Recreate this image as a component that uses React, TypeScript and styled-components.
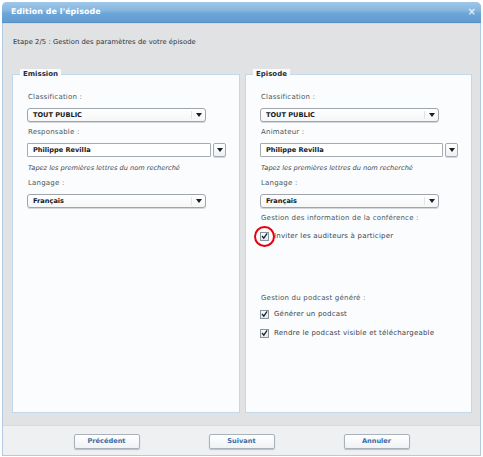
import React from "react";
import styled, { createGlobalStyle } from "styled-components";

const Global = createGlobalStyle`
  html, body { margin: 0; padding: 0; background: #ffffff; }
  body { font-family: "DejaVu Sans", Verdana, sans-serif; }
  * { box-sizing: border-box; }
`;

const Dialog = styled.div`
  margin: 2px 0 0 2px;
  width: 479px;
  height: 454px;
  display: flex;
  flex-direction: column;
  border: 1px solid #b3cbe0;
  border-top: none;
  border-radius: 5px 5px 0 0;
  background: #e1e2e4;
`;

const Header = styled.div`
  height: 21px;
  flex: none;
  display: flex;
  align-items: center;
  justify-content: space-between;
  padding: 0 5px 1px 9px;
  margin: 0 -1px;
  border-radius: 5px 5px 0 0;
  background: linear-gradient(#a0c7e8 0%, #84b5df 45%, #6ea6d7 55%, #619cd1 100%);
  border-bottom: 1px solid #5690c6;
`;

const Title = styled.span`
  color: #ffffff;
  font-weight: bold;
  font-size: 7.9px;
  letter-spacing: 0.1px;
`;

const Close = styled.span`
  color: #e4eef7;
  font-weight: bold;
  font-size: 10px;
  line-height: 10px;
`;

const Body = styled.div`
  flex: 1;
  display: flex;
  flex-direction: column;
  padding: 13px 8px 12px 9px;
  border-top: 1px solid #c7dcee;
`;

const Step = styled.div`
  font-size: 6.8px;
  line-height: 10px;
  color: #2e3338;
  padding-left: 1px;
  letter-spacing: 0.05px;
`;

const Columns = styled.div`
  margin-top: 22px;
  flex: 1;
  display: grid;
  grid-template-columns: 228px 227px;
  column-gap: 5px;
`;

const Panel = styled.fieldset`
  margin: 0;
  min-width: 0;
  padding: 13px 14px 0 14px;
  border: 1px solid #c4d8e9;
  background: #fbfcfd;
  display: flex;
  flex-direction: column;
  align-items: flex-start;
`;

const Legend = styled.legend`
  font-size: 7px;
  line-height: 10px;
  font-weight: bold;
  color: #1d3042;
  padding: 0 3px;
  margin-left: -7px;
  background: #fbfcfd;
`;

const Label = styled.div<{ $gap?: number }>`
  font-size: 7px;
  line-height: 10px;
  color: #4a5660;
  letter-spacing: 0.2px;
  margin: ${(p) => p.$gap ?? 0}px 0 6px 1px;
`;

const Hint = styled.div`
  font-size: 6.6px;
  line-height: 10px;
  font-style: italic;
  color: #3b4650;
  margin-top: 6px;
  padding-left: 1px;
`;

const Select = styled.div<{ $w: number; $h: number }>`
  width: ${(p) => p.$w}px;
  height: ${(p) => p.$h}px;
  display: flex;
  align-items: stretch;
  border: 1px solid #9ea5ac;
  border-radius: 3px;
  background: linear-gradient(#ffffff, #f5f6f7);
  box-shadow: 0 1px 0 #d4d8dc;
  margin-bottom: 5px;
`;

const Value = styled.span`
  flex: 1;
  font-size: 6.6px;
  font-weight: bold;
  color: #15191d;
  display: flex;
  align-items: center;
  padding-left: 5px;
`;

const ArrowCell = styled.span`
  width: 14px;
  display: flex;
  align-items: center;
  justify-content: center;
  border-left: 1px solid #e2e5e8;
  margin: 2px 0;
`;

const Arrow = styled.span`
  width: 0;
  height: 0;
  border-left: 3px solid transparent;
  border-right: 3px solid transparent;
  border-top: 4px solid #1b1f23;
`;

const Combo = styled.div`
  display: flex;
  gap: 2px;
`;

const Input = styled.div<{ $w: number }>`
  width: ${(p) => p.$w}px;
  height: 14px;
  border: 1px solid #a4abb2;
  border-radius: 1px;
  background: #ffffff;
  font-size: 6.6px;
  font-weight: bold;
  color: #15191d;
  display: flex;
  align-items: center;
  padding-left: 5px;
`;

const DropButton = styled.div`
  width: 13px;
  height: 14px;
  border: 1px solid #a4abb2;
  border-radius: 2px;
  background: linear-gradient(#ffffff, #eef0f2);
  box-shadow: 0 1px 0 #d4d8dc;
  display: flex;
  align-items: center;
  justify-content: center;
`;

const CheckRow = styled.div<{ $top: number }>`
  position: relative;
  display: flex;
  align-items: center;
  gap: 5px;
  height: 10px;
  margin-top: ${(p) => p.$top}px;
  font-size: 7px;
  color: #3a454f;
  letter-spacing: 0.2px;
`;

const Box = styled.span`
  width: 9px;
  height: 9px;
  border: 1px solid #8c959d;
  background: linear-gradient(#fafbfc, #e4e7ea);
  display: flex;
  align-items: center;
  justify-content: center;
`;

const Ring = styled.span`
  position: absolute;
  left: -6px;
  top: -5.5px;
  width: 21px;
  height: 21px;
  border: 2.5px solid #e3000f;
  border-radius: 50%;
`;

const Footer = styled.div`
  height: 30px;
  flex: none;
  display: flex;
  align-items: center;
  justify-content: center;
  gap: 69px;
  background: #eef0f2;
  border-top: 1px solid #d3dce4;
  padding-top: 1px;
`;

const Button = styled.button`
  width: 66px;
  height: 15px;
  padding: 0;
  border: 1px solid #a9b2bb;
  border-radius: 2px;
  background: linear-gradient(#ffffff, #f0f2f4);
  box-shadow: 0 1px 1px #b8c0c8;
  font-family: "DejaVu Sans", Verdana, sans-serif;
  font-size: 6.6px;
  font-weight: bold;
  color: #3a6ca4;
`;

const Tick = () => (
  <svg width="8" height="8" viewBox="0 0 8 8">
    <path d="M1.2 4 L3.2 6.4 L7 1" fill="none" stroke="#17222c" strokeWidth="1.5" />
  </svg>
);

const Check = ({ top, label, ring }: { top: number; label: string; ring?: boolean }) => (
  <CheckRow $top={top}>
    <Box>
      <Tick />
    </Box>
    {ring && <Ring />}
    <span>{label}</span>
  </CheckRow>
);

const DropSelect = ({ value, w }: { value: string; w: number }) => (
  <Select $w={w} $h={14}>
    <Value>{value}</Value>
    <ArrowCell>
      <Arrow />
    </ArrowCell>
  </Select>
);

const Person = ({ w }: { w: number }) => (
  <Combo>
    <Input $w={w}>Philippe Revilla</Input>
    <DropButton>
      <Arrow />
    </DropButton>
  </Combo>
);

export default function App() {
  return (
    <>
      <Global />
      <Dialog>
        <Header>
          <Title>Edition de l'épisode</Title>
          <Close>×</Close>
        </Header>
        <Body>
          <Step>Etape 2/5 : Gestion des paramètres de votre épisode</Step>
          <Columns>
            <Panel>
              <Legend>Emission</Legend>
              <Label>Classification :</Label>
              <DropSelect value="TOUT PUBLIC" w={179} />
              <Label>Responsable :</Label>
              <Person w={184} />
              <Hint>Tapez les premières lettres du nom recherché</Hint>
              <Label $gap={5}>Langage :</Label>
              <DropSelect value="Français" w={179} />
            </Panel>
            <Panel>
              <Legend>Episode</Legend>
              <Label>Classification :</Label>
              <DropSelect value="TOUT PUBLIC" w={179} />
              <Label>Animateur :</Label>
              <Person w={183} />
              <Hint>Tapez les premières lettres du nom recherché</Hint>
              <Label $gap={5}>Langage :</Label>
              <DropSelect value="Français" w={179} />
              <Label>Gestion des information de la conférence :</Label>
              <Check top={2} label="Inviter les auditeurs à participer" ring />
              <Label $gap={52}>Gestion du podcast généré :</Label>
              <Check top={0} label="Générer un podcast" />
              <Check top={9} label="Rendre le podcast visible et téléchargeable" />
            </Panel>
          </Columns>
        </Body>
        <Footer>
          <Button>Précédent</Button>
          <Button>Suivant</Button>
          <Button>Annuler</Button>
        </Footer>
      </Dialog>
    </>
  );
}
